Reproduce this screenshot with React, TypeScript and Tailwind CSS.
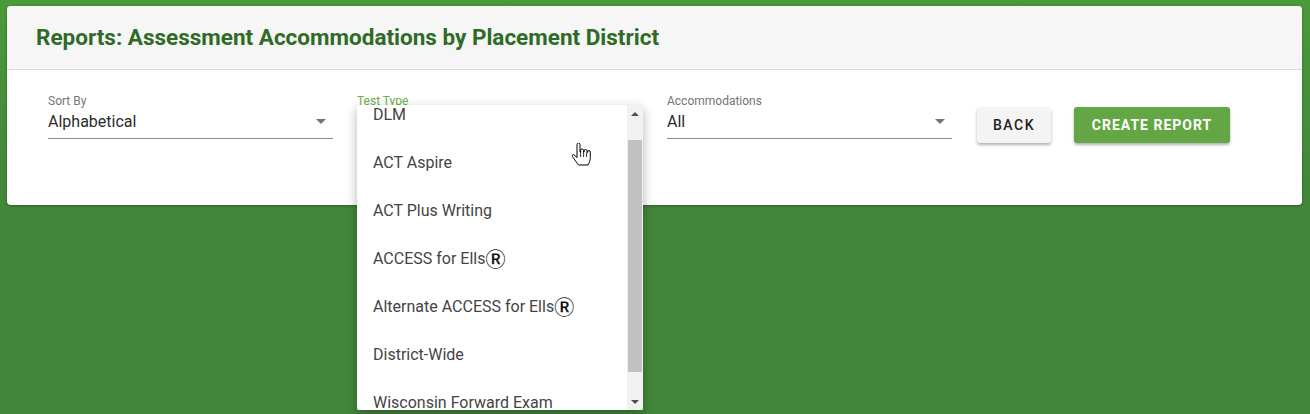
import React from "react";

const Arrow = () => (
  <svg width="10" height="5" viewBox="0 0 10 5" className="shrink-0">
    <path d="M0 0h10L5 5z" fill="#757575" />
  </svg>
);

function Field({ label, value, labelClass }: { label: string; value: string; labelClass?: string }) {
  return (
    <div className="flex w-[285px] flex-col">
      <div className={`text-[12px] leading-[14px] ${labelClass ?? "text-[#757575]"}`}>{label}</div>
      <div className="flex h-[31px] items-center justify-between border-b border-[#8a8a8a] pb-[3px] pr-[7px]">
        <span className="text-[16px] text-[#2b2b2b]">{value}</span>
        <Arrow />
      </div>
    </div>
  );
}

const R = () => (
  <span
    className="text-[20px] leading-none font-medium text-[#111]"
    style={{ fontFamily: "'Noto Sans CJK JP', 'DejaVu Sans', sans-serif" }}
  >
    Ⓡ
  </span>
);

const items: React.ReactNode[] = [
  "DLM",
  "ACT Aspire",
  "ACT Plus Writing",
  <>ACCESS for Ells<R /></>,
  <>Alternate ACCESS for Ells<R /></>,
  "District-Wide",
  "Wisconsin Forward Exam",
];

export default function App() {
  return (
    <div
      className="min-h-[414px] w-full bg-[linear-gradient(to_bottom,#4a993b,#43873a_45%)] pl-[7px] pr-[8px] pt-[6px]"
      style={{ fontFamily: "Roboto, 'Liberation Sans', sans-serif" }}
    >
      <div className="relative rounded-[4px] bg-white shadow-[0_1px_3px_rgba(0,0,0,0.3)]">
        <div className="flex h-[64px] items-center rounded-t-[4px] border-b border-[#dcdcdc] bg-[#f6f6f6] pl-[29px]">
          <h1 className="text-[22.5px] font-bold text-[#2e6b27]">
            Reports: Assessment Accommodations by Placement District
          </h1>
        </div>
        <div className="flex h-[135px] items-start gap-[24px] pl-[41px] pt-[24px]">
          <Field label="Sort By" value="Alphabetical" />
          <div className="relative">
            <Field label="Test Type" value="" labelClass="text-[#6ab04c]" />
          </div>
          <div className="ml-px">
            <Field label="Accommodations" value="All" />
          </div>
          <button className="ml-px mt-[13px] h-[36px] w-[74px] rounded-[3px] bg-[#f4f4f4] text-[14px] font-medium tracking-[1.5px] text-[#222] shadow-[0_2px_3px_rgba(0,0,0,0.3)]">
            BACK
          </button>
          <button className="-ml-px mt-[13px] h-[36px] w-[156px] rounded-[3px] bg-[#62a744] text-[14px] font-bold tracking-[1px] text-white shadow-[0_2px_3px_rgba(0,0,0,0.3)]">
            CREATE REPORT
          </button>
        </div>
      </div>

      <div className="absolute left-[357px] top-[105px] flex h-[305px] w-[286px] overflow-hidden rounded-[2px] bg-white shadow-[0_4px_12px_rgba(0,0,0,0.3)]">
        <div className="flex-1 overflow-hidden">
          <div className="-mt-[14px]">
            {items.map((t, i) => (
              <div key={i} className="flex h-[48px] items-center pl-[16px] text-[16px] text-[#444]">
                {t}
              </div>
            ))}
          </div>
        </div>
        <div className="flex w-[16px] flex-col items-center bg-[#f1f1f1]">
          <div className="flex h-[17px] w-full items-center justify-center">
            <svg width="8" height="4" viewBox="0 0 8 4"><path d="M0 4L4 0l4 4z" fill="#505050" /></svg>
          </div>
          <div className="mt-[18px] h-[232px] w-[14px] bg-[#c1c1c1]" />
          <div className="flex flex-1 items-end justify-center pb-[6px]">
            <svg width="8" height="4" viewBox="0 0 8 4"><path d="M0 0h8L4 4z" fill="#505050" /></svg>
          </div>
        </div>
      </div>

      <svg className="absolute left-[571px] top-[143px]" width="20" height="24" viewBox="0 0 20 24">
        <path
          d="M6 1.5a1.5 1.5 0 0 1 3 0V9h.6V7.5a1.5 1.5 0 0 1 3 0V9h.5V8a1.5 1.5 0 0 1 3 0v1.5h.4V9a1.4 1.4 0 0 1 2.8 0v5.5c0 3-1.2 5.5-2.3 7.5H7.5C6 20 3 16 1.5 13.5c-.7-1.2.5-2.5 1.6-1.6L6 14.5Z"
          fill="white"
          stroke="black"
          strokeWidth="1"
        />
        <path d="M9.6 9v5M12.6 9v5M15.6 9.5v4.5" stroke="black" strokeWidth="0.8" />
      </svg>
    </div>
  );
}
